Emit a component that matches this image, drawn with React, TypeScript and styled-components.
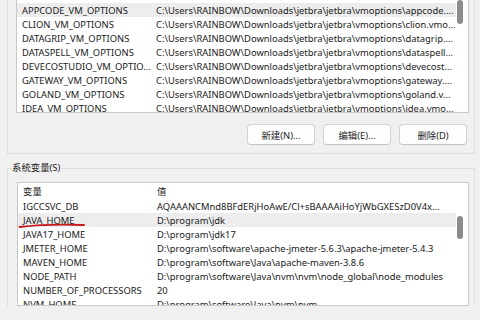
import React from 'react';
import styled, { createGlobalStyle } from 'styled-components';

const GlobalStyle = createGlobalStyle`
  html, body {
    margin: 0;
    padding: 0;
    background: #f0f0f0;
  }
  body {
    font-family: "Noto Sans", "Noto Sans CJK SC", sans-serif;
    color: #1a1a1a;
  }
`;

const Page = styled.div`
  width: 480px;
  height: 320px;
  overflow: hidden;
  box-sizing: border-box;
  padding: 0 5px 0 7px;
  background: #f0f0f0;
`;

const UserGroup = styled.div`
  border: 1px solid #dcdcdc;
  border-top: none;
  padding: 0 5px 8px 8px;
`;

const SysGroup = styled.fieldset`
  margin: 7px 0 0;
  padding: 0 5px 0 9px;
  border: 1px solid #dcdcdc;
  border-bottom: none;
  min-width: 0;
`;

const Legend = styled.legend`
  font-size: 9.4px;
  line-height: 14px;
  padding: 0 2px 0 0;
  margin-left: -5px;
  color: #1a1a1a;
`;

const ListBox = styled.div<{ $height: number; $noTop?: boolean }>`
  display: flex;
  height: ${(p) => p.$height}px;
  box-sizing: border-box;
  background: #ffffff;
  border: 1px solid #c9c9c9;
  border-top: ${(p) => (p.$noTop ? 'none' : '1px solid #c9c9c9')};
  overflow: hidden;
`;

const ListBody = styled.div<{ $padTop?: number }>`
  position: relative;
  flex: 1;
  min-width: 0;
  padding-top: ${(p) => p.$padTop ?? 0}px;
  overflow: hidden;
`;

const Row = styled.div<{ $selected?: boolean; $header?: boolean }>`
  display: grid;
  grid-template-columns: 139px 1fr;
  height: ${(p) => (p.$header ? 16 : 14)}px;
  line-height: ${(p) => (p.$header ? 18 : 15)}px;
  font-size: 9.4px;
  background: ${(p) => (p.$selected ? '#ededed' : 'transparent')};
  white-space: nowrap;
`;

const Cell = styled.div<{ $first?: boolean }>`
  padding-left: ${(p) => (p.$first ? 5 : 0)}px;
`;

const ScrollTrack = styled.div`
  width: 12px;
  flex: none;
  display: flex;
  flex-direction: column;
`;

const Thumb = styled.div<{ $top: number; $size: number }>`
  margin: ${(p) => p.$top}px 0 0 1px;
  width: 6px;
  height: ${(p) => p.$size}px;
  border-radius: 3px;
  background: #8b8b8b;
`;

const ButtonRow = styled.div`
  display: flex;
  justify-content: flex-end;
  gap: 8px;
  margin-top: 11px;
  padding-right: 2px;
`;

const Button = styled.button`
  width: 68px;
  height: 21px;
  box-sizing: border-box;
  border: 1px solid #d3d3d3;
  border-bottom-color: #c4c4c4;
  border-radius: 4px;
  background: #fdfdfd;
  font-family: inherit;
  font-size: 9.4px;
  color: #262626;
  padding: 0;
`;

const Mark = styled.svg`
  position: absolute;
  left: 0;
  top: 37px;
  pointer-events: none;
`;

const SysList = styled.div`
  margin-top: 7px;
`;

const jb = 'C:\\Users\\RAINBOW\\Downloads\\jetbra\\jetbra\\vmoptions\\';

const USER_VARS: [string, string][] = [
  ['APPCODE_VM_OPTIONS', jb + 'appcode....'],
  ['CLION_VM_OPTIONS', jb + 'clion.vmo...'],
  ['DATAGRIP_VM_OPTIONS', jb + 'datagrip....'],
  ['DATASPELL_VM_OPTIONS', jb + 'dataspell...'],
  ['DEVECOSTUDIO_VM_OPTIO...', jb + 'devecost...'],
  ['GATEWAY_VM_OPTIONS', jb + 'gateway....'],
  ['GOLAND_VM_OPTIONS', jb + 'goland.v...'],
  ['IDEA_VM_OPTIONS', jb + 'idea.vmo...'],
];

const SYS_VARS: [string, string][] = [
  ['IGCCSVC_DB', 'AQAAANCMnd8BFdERjHoAwE/Cl+sBAAAAiHoYjWbGXESzD0V4x...'],
  ['JAVA_HOME', 'D:\\program\\jdk'],
  ['JAVA17_HOME', 'D:\\program\\jdk17'],
  ['JMETER_HOME', 'D:\\program\\software\\apache-jmeter-5.6.3\\apache-jmeter-5.4.3'],
  ['MAVEN_HOME', 'D:\\program\\software\\Java\\apache-maven-3.8.6'],
  ['NODE_PATH', 'D:\\program\\software\\Java\\nvm\\nvm\\node_global\\node_modules'],
  ['NUMBER_OF_PROCESSORS', '20'],
  ['NVM_HOME', 'D:\\program\\software\\Java\\nvm\\nvm'],
];

export default function App() {
  return (
    <Page>
      <GlobalStyle />
      <UserGroup>
        <ListBox $height={113} $noTop>
          <ListBody $padTop={3}>
            {USER_VARS.map(([name, value], i) => (
              <Row key={name} $selected={i === 0}>
                <Cell $first>{name}</Cell>
                <Cell>{value}</Cell>
              </Row>
            ))}
          </ListBody>
          <ScrollTrack>
            <Thumb $top={0} $size={24} />
          </ScrollTrack>
        </ListBox>
        <ButtonRow>
          <Button>新建(N)...</Button>
          <Button>编辑(E)...</Button>
          <Button>删除(D)</Button>
        </ButtonRow>
      </UserGroup>
      <SysGroup>
        <Legend>系统变量(S)</Legend>
        <SysList>
          <ListBox $height={124}>
            <ListBody>
              <Row $header>
                <Cell $first>变量</Cell>
                <Cell>值</Cell>
              </Row>
              {SYS_VARS.map(([name, value]) => (
                <Row key={name} $selected={name === 'JAVA_HOME'}>
                  <Cell $first>{name}</Cell>
                  <Cell>{value}</Cell>
                </Row>
              ))}
              <Mark width="72" height="10" viewBox="0 0 72 10">
                <path
                  d="M1.5 7 Q 30 3.5 66 5"
                  fill="none"
                  stroke="#c8161d"
                  strokeWidth="1.8"
                  strokeLinecap="round"
                />
              </Mark>
            </ListBody>
            <ScrollTrack>
              <Thumb $top={33} $size={23} />
            </ScrollTrack>
          </ListBox>
        </SysList>
      </SysGroup>
    </Page>
  );
}
